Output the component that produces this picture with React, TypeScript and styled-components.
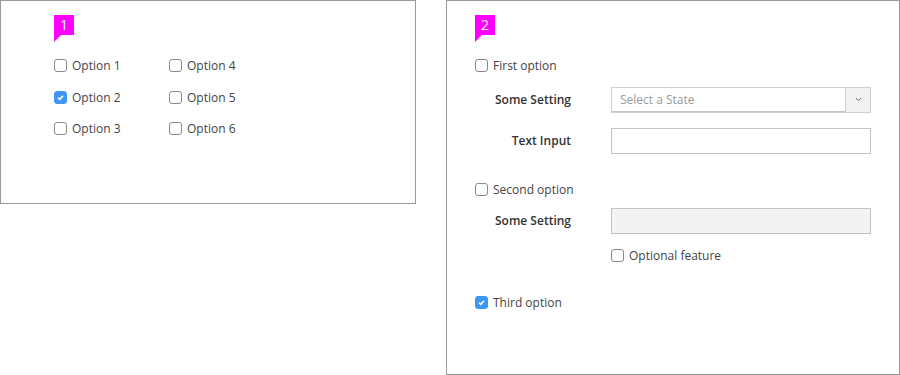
import React from "react";
import styled, { createGlobalStyle } from "styled-components";

const GlobalStyle = createGlobalStyle`
  body {
    margin: 0;
    font-family: "Open Sans", "Noto Sans", sans-serif;
    color: #444;
    background: #fff;
  }
`;

const Page = styled.div`
  display: flex;
  align-items: flex-start;
  gap: 30px;
  width: 900px;
  height: 375px;
`;

// 예시 패널
const Panel = styled.section<{ $w: number; $h: number }>`
  box-sizing: border-box;
  width: ${(p) => p.$w}px;
  height: ${(p) => p.$h}px;
  border: 1px solid #999;
  padding: 14px 0 0 ${(p) => (p.$w > 430 ? 28 : 53)}px;
`;

// 번호 뱃지 (말풍선 꼬리 포함)
const Badge = styled.div`
  position: relative;
  width: 20px;
  height: 20px;
  background: #ff00ff;
  color: #fff;
  font-size: 14px;
  line-height: 20px;
  text-align: center;
  &::after {
    content: "";
    position: absolute;
    left: 0;
    top: 20px;
    border-top: 7px solid #ff00ff;
    border-right: 7px solid transparent;
  }
`;

const OptionGrid = styled.div`
  display: grid;
  grid-auto-flow: column;
  grid-template-rows: repeat(3, 20px);
  grid-template-columns: 115px 115px;
  row-gap: 11.5px;
  margin-top: 20.5px;
`;

const CheckRow = styled.label<{ $mt?: number }>`
  display: flex;
  align-items: center;
  gap: 5px;
  height: 20px;
  margin-top: ${(p) => p.$mt ?? 0}px;
  font-size: 12px;
  color: #444;
`;

const Box = styled.span<{ $on?: boolean }>`
  box-sizing: border-box;
  width: 13px;
  height: 13px;
  border-radius: 3px;
  border: 1px solid ${(p) => (p.$on ? "#3d97f5" : "#8a8a8a")};
  background: ${(p) => (p.$on ? "#3d97f5" : "#fff")};
  display: flex;
  align-items: center;
  justify-content: center;
  flex-shrink: 0;
`;

const Check = ({ on }: { on?: boolean }) => (
  <Box $on={on}>
    {on && (
      <svg width="9" height="9" viewBox="0 0 9 9">
        <path d="M2 4.6 L3.8 6.3 L7 2.8" fill="none" stroke="#fff" strokeWidth="1.6" />
      </svg>
    )}
  </Box>
);

const Form = styled.div<{ $mt: number }>`
  display: grid;
  grid-template-columns: 96px 260px;
  column-gap: 40px;
  row-gap: 15px;
  align-items: center;
  margin-top: ${(p) => p.$mt}px;
`;

const Label = styled.div`
  text-align: right;
  font-size: 12px;
  font-weight: 600;
  color: #333;
`;

const Field = styled.div<{ $disabled?: boolean }>`
  box-sizing: border-box;
  height: 26px;
  border: 1px solid #c4c4c4;
  background: ${(p) => (p.$disabled ? "#f3f3f3" : "#fff")};
`;

const Select = styled(Field)`
  display: flex;
  align-items: center;
  border-color: #cfcfcf;
  box-shadow: inset 0 -1px 0 #c4c4c4;
`;

const Placeholder = styled.span`
  flex: 1;
  padding-left: 8px;
  font-size: 12px;
  color: #9a9a9a;
`;

const Arrow = styled.span`
  width: 24px;
  height: 100%;
  border-left: 1px solid #cfcfcf;
  background: #f2f2f2;
  display: flex;
  align-items: center;
  justify-content: center;
`;

const FieldCell = styled.div`
  grid-column: 2;
`;

export default function App() {
  return (
    <>
      <GlobalStyle />
      <Page>
        <Panel $w={416} $h={204}>
          <Badge>1</Badge>
          <OptionGrid>
            {[1, 2, 3, 4, 5, 6].map((n) => (
              <CheckRow key={n}>
                <Check on={n === 2} />
                Option {n}
              </CheckRow>
            ))}
          </OptionGrid>
        </Panel>
        <Panel $w={454} $h={375}>
          <Badge>2</Badge>
          <CheckRow $mt={20.5}>
            <Check />
            First option
          </CheckRow>
          <Form $mt={11}>
            <Label>Some Setting</Label>
            <Select>
              <Placeholder>Select a State</Placeholder>
              <Arrow>
                <svg width="7" height="5" viewBox="0 0 7 5">
                  <path d="M0.8 1 L3.5 3.6 L6.2 1" fill="none" stroke="#666" strokeWidth="1" />
                </svg>
              </Arrow>
            </Select>
            <Label>Text Input</Label>
            <Field />
          </Form>
          <CheckRow $mt={26}>
            <Check />
            Second option
          </CheckRow>
          <Form $mt={8}>
            <Label>Some Setting</Label>
            <Field $disabled />
            <FieldCell>
              <CheckRow $mt={-3}>
                <Check />
                Optional feature
              </CheckRow>
            </FieldCell>
          </Form>
          <CheckRow $mt={27}>
            <Check on />
            Third option
          </CheckRow>
        </Panel>
      </Page>
    </>
  );
}
